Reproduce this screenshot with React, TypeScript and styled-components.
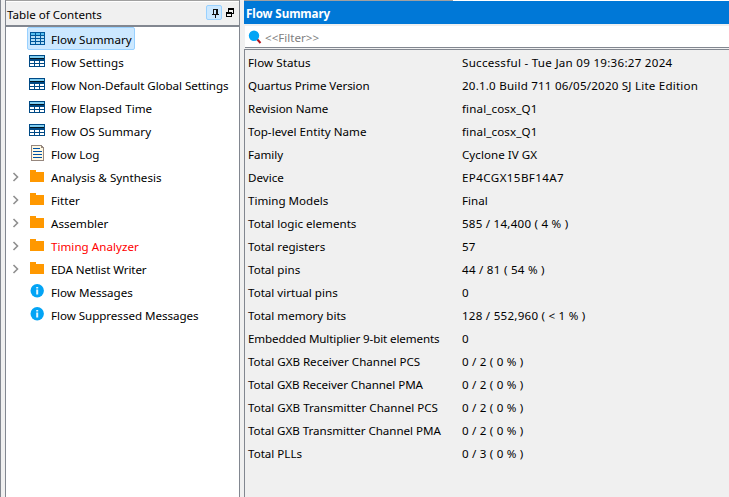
import React from "react";
import styled, { createGlobalStyle } from "styled-components";

const GlobalStyle = createGlobalStyle`
  * { box-sizing: border-box; }
  body {
    margin: 0;
    overflow: hidden;
    background: #f0f0f0;
    color: #000;
    font: 11.6px/23px "Noto Sans", sans-serif;
  }
`;

const LINE = "#828790";

const Window = styled.div`
  display: flex;
  width: 729px;
  height: 497px;
  background: #f0f0f0;
  border-left: 1px solid ${LINE};
`;

const Sidebar = styled.aside`
  width: 235px;
  margin-left: 4px;
  border: solid ${LINE};
  border-width: 0 1px;
  background: #fff;
`;

const TopRule = styled.div`
  height: 1px;
  background: #a0a0a0;
`;

const SidebarHeader = styled.header`
  display: flex;
  align-items: center;
  height: 26px;
  padding: 2px 5px 0 1px;
  border-top: 1px solid #fff;
  border-bottom: 2px solid ${LINE};
  background: #f0f0f0;
`;

const HeaderTitle = styled.span`
  flex: 1;
`;

const PinButton = styled.button`
  display: flex;
  width: 16px;
  height: 15px;
  margin: -4px 4px 0 0;
  padding: 0;
  border: 1px solid #99d1ff;
  border-radius: 2px;
  background: #cce8ff;
`;

const FloatButton = styled.button`
  display: flex;
  margin: -3px 0 0;
  padding: 0;
  border: 0;
  background: none;
`;

const TreeRow = styled.div`
  display: flex;
  height: 23px;
`;

const Expander = styled.span`
  display: flex;
  width: 21px;
  padding: 6px 0 0 6px;
`;

const TreeItem = styled.div<{ $selected?: boolean; $failed?: boolean }>`
  display: flex;
  height: 23px;
  padding: 0 2px 0 1px;
  border: 1px solid ${(p) => (p.$selected ? "#99d1ff" : "transparent")};
  border-radius: 2px;
  background: ${(p) => (p.$selected ? "#cce8ff" : "transparent")};
  color: ${(p) => (p.$failed ? "#f00" : "#000")};
`;

const IconSlot = styled.span`
  display: flex;
  width: 22px;
  padding-top: 2px;
`;

const Label = styled.span<{ $track?: number }>`
  white-space: pre;
  letter-spacing: ${(p) => p.$track ?? 0}px;
`;

const Report = styled.main`
  display: flex;
  flex: 1;
  flex-direction: column;
  margin-left: 4px;
`;

const ReportRule = styled(TopRule)`
  width: 209px;
  box-shadow: 209px 0 #fff, 300px 0 #fff;
`;

const ReportTitle = styled.h1`
  height: 23px;
  margin: 0;
  padding: 1px 0 0 2px;
  background: #0078d7;
  color: #fff;
  font-size: 11.6px;
  font-weight: 700;
`;

const FilterBar = styled.div`
  display: flex;
  height: 22px;
  margin: 2px 0 1px 1px;
  padding-left: 3px;
  border-bottom: 1px solid ${LINE};
  background: #fff;
  color: #808080;
`;

const FilterIcon = styled.span`
  display: flex;
  width: 17px;
  padding-top: 4px;
`;

const Table = styled.div`
  flex: 1;
  padding: 1px 0 0 3px;
  border: solid ${LINE};
  border-width: 1px 0 0 1px;
`;

const TableRow = styled.div`
  display: grid;
  grid-template-columns: 214px 1fr;
  height: 23px;
`;

type IconKind = "summary" | "table" | "log" | "folder" | "info";

const TreeIcon = ({ kind }: { kind: IconKind }) => (
  <svg width="16" height="18" viewBox="0 0 16 18" shapeRendering={kind === "info" ? "auto" : "crispEdges"}>
    {kind === "summary" && (
      <>
        <path fill="#00579b" d="M1 2h15v13H1z" />
        <path fill="#56bfee" d="M2 3h4v2H2zM7 3h4v2H7zM12 3h3v2h-3z" />
        <path fill="#b4dff6" d="M2 6h4v2H2zM7 6h4v2H7zM12 6h3v2h-3zM2 9h4v2H2zM7 9h4v2H7zM12 9h3v2h-3zM2 12h4v2H2zM7 12h4v2H7zM12 12h3v2h-3z" />
      </>
    )}
    {kind === "table" && (
      <>
        <path fill="#004a86" d="M0 2h16v12H0z" />
        <path fill="#7fcdf1" d="M1 3h14v2H1z" />
        <path fill="#001522" d="M1 5h14v1H1z" />
        <path fill="#fff" d="M1 8h4v2H1zM6 8h4v2H6zM11 8h4v2h-4zM1 11h4v2H1zM6 11h4v2H6zM11 11h4v2h-4z" />
      </>
    )}
    {kind === "log" && (
      <>
        <path fill="#fff8e2" stroke="#96877e" d="M2.5 0.5h10l2 2v13h-12z" />
        <path stroke="#96877e" fill="none" d="M12.5 0.5v2h2" />
        <path fill="#0052a5" d="M4 3h7v1H4zM4 6h9v1H4zM4 9h9v1H4zM4 12h9v1H4z" />
      </>
    )}
    {kind === "folder" && <path fill="#ff9800" d="M1 2h6v2h8v10H1z" />}
    {kind === "info" && (
      <>
        <circle cx="8.2" cy="7.7" r="6.7" fill="#03a4f5" />
        <path fill="#e4f6ff" d="M7.2 4h2v1.5h-2zM7.2 6.5h2v5h-2z" />
      </>
    )}
  </svg>
);

interface TreeEntry {
  label: string;
  icon: IconKind;
  track?: number;
  expandable?: boolean;
  selected?: boolean;
  failed?: boolean;
}

const tree: TreeEntry[] = [
  { label: "Flow Summary", icon: "summary", track: 0.04, selected: true },
  { label: "Flow Settings", icon: "table", track: 0.06 },
  { label: "Flow Non-Default Global Settings", icon: "table", track: -0.07 },
  { label: "Flow Elapsed Time", icon: "table", track: 0.07 },
  { label: "Flow OS Summary", icon: "table", track: 0.1 },
  { label: "Flow Log", icon: "log", track: 0.05 },
  { label: "Analysis & Synthesis", icon: "folder", track: 0.03, expandable: true },
  { label: "Fitter", icon: "folder", expandable: true },
  { label: "Assembler", icon: "folder", expandable: true },
  { label: "Timing Analyzer", icon: "folder", track: 0.03, expandable: true, failed: true },
  { label: "EDA Netlist Writer", icon: "folder", track: -0.1, expandable: true },
  { label: "Flow Messages", icon: "info" },
  { label: "Flow Suppressed Messages", icon: "info", track: -0.04 },
];

const rows: [string, string, number, number][] = [
  ["Flow Status", "Successful - Tue Jan 09 19:36:27 2024", 0.07, 0.27],
  ["Quartus Prime Version", "20.1.0 Build 711 06/05/2020 SJ Lite Edition", -0.09, 0.2],
  ["Revision Name", "final_cosx_Q1", -0.05, 0.12],
  ["Top-level Entity Name", "final_cosx_Q1", 0.03, 0.12],
  ["Family", "Cyclone IV GX", 0, 0.04],
  ["Device", "EP4CGX15BF14A7", 0, 0.4],
  ["Timing Models", "Final", 0, 0],
  ["Total logic elements", "585 / 14,400 ( 4 % )", 0, 0.23],
  ["Total registers", "57", 0, 0.2],
  ["Total pins", "44 / 81 ( 54 % )", 0, 0.25],
  ["Total virtual pins", "0", 0, 0],
  ["Total memory bits", "128 / 552,960 ( < 1 % )", 0, 0.24],
  ["Embedded Multiplier 9-bit elements", "0", -0.11, 0],
  ["Total GXB Receiver Channel PCS", "0 / 2 ( 0 % )", -0.02, 0.2],
  ["Total GXB Receiver Channel PMA", "0 / 2 ( 0 % )", -0.07, 0.2],
  ["Total GXB Transmitter Channel PCS", "0 / 2 ( 0 % )", 0, 0.2],
  ["Total GXB Transmitter Channel PMA", "0 / 2 ( 0 % )", -0.04, 0.2],
  ["Total PLLs", "0 / 3 ( 0 % )", 0, 0.2],
];

export default function App() {
  return (
    <>
      <GlobalStyle />
      <Window>
        <Sidebar>
          <TopRule />
          <SidebarHeader>
            <HeaderTitle><Label>Table of Contents</Label></HeaderTitle>
            <PinButton aria-label="Pin">
              <svg width="14" height="13" shapeRendering="crispEdges">
                <path fill="#111" d="M6 3h5v5h1v1H9v3H8V9H5V8h1zM7 4v4h2V4z" fillRule="evenodd" />
              </svg>
            </PinButton>
            <FloatButton aria-label="Float">
              <svg width="8" height="10" shapeRendering="crispEdges">
                <path fill="#000" fillRule="evenodd" d="M2 0h6v6H6V5h1V2H3v2H2zM0 4h6v5H0zM1 6v2h4V6z" />
              </svg>
            </FloatButton>
          </SidebarHeader>
          {tree.map((t) => (
            <TreeRow key={t.label}>
              <Expander>
                {t.expandable && (
                  <svg width="8" height="12">
                    <path d="M1.5 2L5.5 6L1.5 10" fill="none" stroke="#8f8f8f" strokeWidth="1.6" />
                  </svg>
                )}
              </Expander>
              <TreeItem $selected={t.selected} $failed={t.failed}>
                <IconSlot><TreeIcon kind={t.icon} /></IconSlot>
                <Label $track={t.track}>{t.label}</Label>
              </TreeItem>
            </TreeRow>
          ))}
        </Sidebar>
        <Report>
          <ReportRule />
          <ReportTitle><Label $track={-0.08}>Flow Summary</Label></ReportTitle>
          <FilterBar>
            <FilterIcon>
              <svg width="14" height="14">
                <path d="M8.5 8.5L12.5 13" stroke="#b3141c" strokeWidth="2" />
                <circle cx="6" cy="5.8" r="5.2" fill="#03a4f5" />
              </svg>
            </FilterIcon>
            <Label>&lt;&lt;Filter&gt;&gt;</Label>
          </FilterBar>
          <Table>
            {rows.map(([name, value, nameTrack, valueTrack]) => (
              <TableRow key={name}>
                <Label $track={nameTrack}>{name}</Label>
                <Label $track={valueTrack}>{value}</Label>
              </TableRow>
            ))}
          </Table>
        </Report>
      </Window>
    </>
  );
}
